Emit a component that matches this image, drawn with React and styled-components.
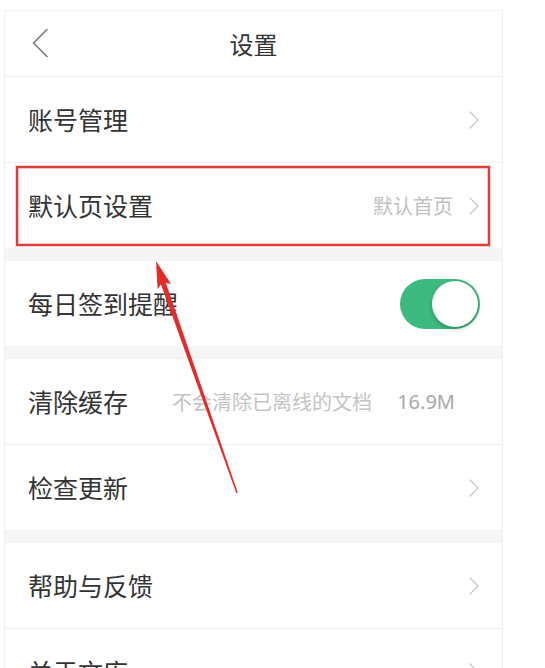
import React from 'react';
import styled, { createGlobalStyle } from 'styled-components';

const GlobalStyle = createGlobalStyle`
  html, body {
    margin: 0;
    padding: 0;
    background: #ffffff;
  }
  body {
    font-family: "Noto Sans CJK SC", "Noto Sans", sans-serif;
    color: #333333;
  }
`;

const Chevron = () => (
  <svg width="12" height="18" viewBox="0 0 12 18">
    <path
      d="M2 1 L10 9 L2 17"
      fill="none"
      stroke="#c9c9c9"
      strokeWidth="1.4"
      strokeLinecap="round"
      strokeLinejoin="round"
    />
  </svg>
);

const BackIcon = () => (
  <svg width="18" height="30" viewBox="0 0 18 30">
    <path
      d="M16 1.5 L2.5 15 L16 28.5"
      fill="none"
      stroke="#7a7a7a"
      strokeWidth="1.6"
      strokeLinecap="round"
      strokeLinejoin="round"
    />
  </svg>
);

const Row = ({ label, value, note, arrow = true, children, highlight }) => (
  <StyledRow>
    <Label>{label}</Label>
    {note && <Note>{note}</Note>}
    <Right>
      {value && <Value>{value}</Value>}
      {children}
      {arrow && <Chevron />}
    </Right>
    {highlight && <Highlight />}
  </StyledRow>
);

const Toggle = ({ on }) => (
  <Track on={on ? 1 : 0}>
    <Knob />
  </Track>
);

const App = () => {
  return (
    <Page>
      <GlobalStyle />
      <Panel>
        <Header>
          <Back>
            <BackIcon />
          </Back>
          <Title>设置</Title>
        </Header>

        <Group>
          <Row label="账号管理" />
          <Row label="默认页设置" value="默认首页" highlight />
        </Group>

        <Group>
          <Row label="每日签到提醒" arrow={false}>
            <Toggle on />
          </Row>
        </Group>

        <Group>
          <Row label="清除缓存" note="不会清除已离线的文档" arrow={false}>
            <Size>16.9M</Size>
          </Row>
          <Row label="检查更新" />
        </Group>

        <Group>
          <Row label="帮助与反馈" />
          <Row label="关于文库" />
        </Group>
      </Panel>

      <Arrow width="545" height="668" viewBox="0 0 545 668">
        <polygon
          points="156,261 171,284 165.8,282.8 237.8,492.8 236.4,493.2 161,284.6 157.6,289"
          fill="#e52a2a"
        />
      </Arrow>
    </Page>
  );
};

const Page = styled.div`
  position: relative;
  width: 545px;
  height: 668px;
  overflow: hidden;
  padding-top: 10px;
  box-sizing: border-box;
`;

const Panel = styled.div`
  margin-left: 4px;
  width: 499px;
  box-sizing: border-box;
  border: 1px solid #efefef;
  border-bottom: none;
  background: #f5f5f6;
  display: flex;
  flex-direction: column;
  gap: 13px;
`;

const Header = styled.div`
  height: 65px;
  background: #ffffff;
  display: flex;
  align-items: center;
  justify-content: center;
  position: relative;
  margin-bottom: -13px;
  border-bottom: 1px solid #eeeeee;
`;

const Back = styled.div`
  position: absolute;
  left: 26px;
  top: 17px;
  display: flex;
`;

const Title = styled.div`
  font-size: 24px;
  color: #333333;
  line-height: 1;
`;

const Group = styled.div`
  background: #ffffff;
  display: flex;
  flex-direction: column;

  & > div + div {
    border-top: 1px solid #efefef;
  }
`;

const StyledRow = styled.div`
  position: relative;
  height: 85px;
  padding: 0 22px 0 23px;
  display: flex;
  align-items: center;
`;

const Label = styled.div`
  font-size: 25px;
  color: #333333;
  line-height: 1;
  white-space: nowrap;
`;

const Note = styled.div`
  margin-left: 44px;
  font-size: 20px;
  color: #c4c4c4;
  line-height: 1;
  white-space: nowrap;
`;

const Right = styled.div`
  margin-left: auto;
  display: flex;
  align-items: center;
  gap: 15px;
`;

const Value = styled.div`
  font-size: 20px;
  color: #c0c0c0;
  line-height: 1;
`;

const Size = styled.div`
  font-family: "Noto Sans", sans-serif;
  font-size: 20px;
  color: #a8a8a8;
  margin-right: 25px;
  line-height: 1;
`;

const Track = styled.div`
  width: 80px;
  height: 50px;
  border-radius: 25px;
  background: ${(p) => (p.on ? '#3dba7f' : '#e5e5e5')};
  display: flex;
  align-items: center;
  justify-content: ${(p) => (p.on ? 'flex-end' : 'flex-start')};
  padding: 2px;
  box-sizing: border-box;
`;

const Knob = styled.div`
  width: 46px;
  height: 46px;
  border-radius: 50%;
  background: #ffffff;
  box-shadow: 0 2px 4px rgba(0, 0, 0, 0.25);
`;

const Highlight = styled.div`
  position: absolute;
  top: 3px;
  bottom: 2px;
  left: 11px;
  right: 12px;
  border: 2px solid #e23b3b;
  box-shadow: inset 0 0 0 1px #f7c4c4, 0 0 0 1px #f9d2d2;
  pointer-events: none;
`;

const Arrow = styled.svg`
  position: absolute;
  top: 0;
  left: 0;
  pointer-events: none;
`;

export default App;
